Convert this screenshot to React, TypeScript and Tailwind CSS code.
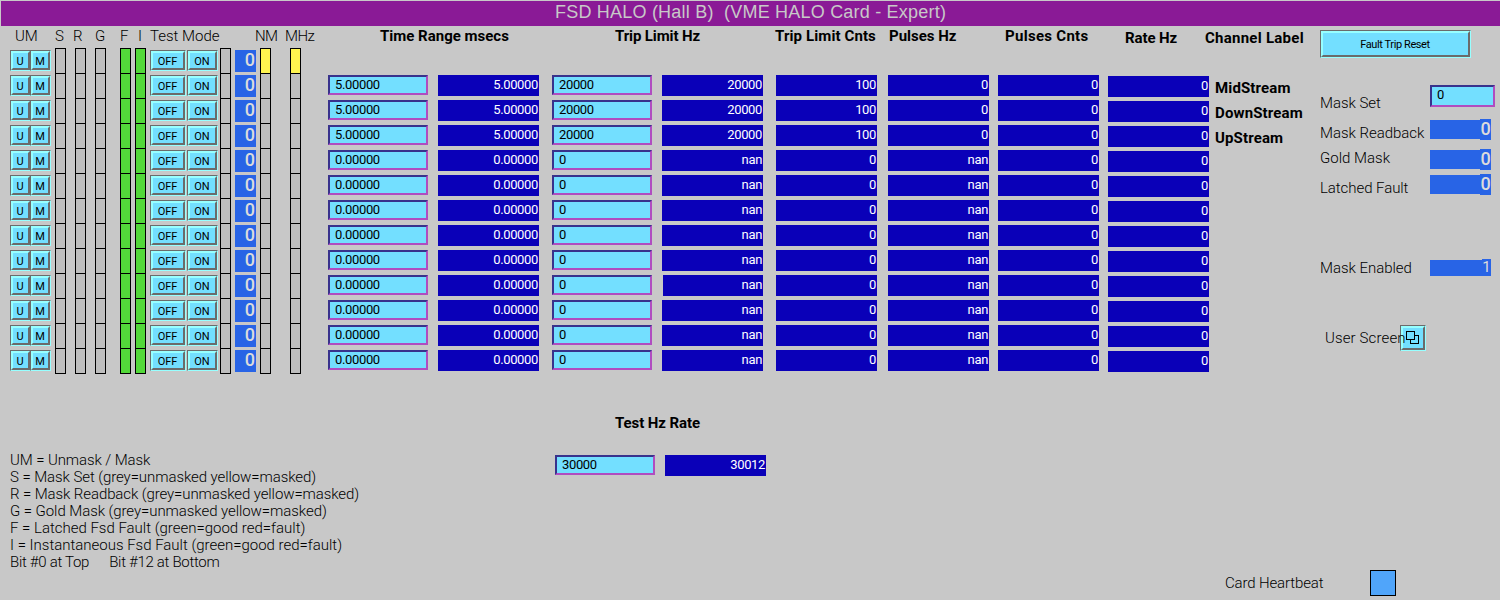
import type { ReactNode } from 'react';

type ChannelRow = {
  time: string;
  limit: string;
  limitReadback: string;
  limitCounts: string;
  pulsesHz: string;
  label: string;
};

const active = (label: string): ChannelRow => ({
  time: '5.00000',
  limit: '20000',
  limitReadback: '20000',
  limitCounts: '100',
  pulsesHz: '0',
  label,
});

const idle: ChannelRow = {
  time: '0.00000',
  limit: '0',
  limitReadback: 'nan',
  limitCounts: '0',
  pulsesHz: 'nan',
  label: '',
};

const channels: ChannelRow[] = [
  active('MidStream'),
  active('DownStream'),
  active('UpStream'),
  ...Array.from({ length: 9 }, () => idle),
];

const legend = [
  { text: 'UM = Unmask / Mask', tracking: 'tracking-[-0.1px]' },
  { text: 'S = Mask Set (grey=unmasked yellow=masked)', tracking: 'tracking-[-0.08px]' },
  { text: 'R = Mask Readback (grey=unmasked yellow=masked)', tracking: 'tracking-[-0.1px]' },
  { text: 'G = Gold Mask (grey=unmasked yellow=masked)', tracking: 'tracking-[-0.07px]' },
  { text: 'F = Latched Fsd Fault (green=good red=fault)', tracking: 'tracking-[-0.01px]' },
  { text: 'I = Instantaneous Fsd Fault (green=good red=fault)', tracking: 'tracking-[-0.01px]' },
  { text: 'Bit #0 at Top      Bit #12 at Bottom', tracking: 'tracking-[-0.3px]' },
];

function MotifButton({ className, children }: { className: string; children: ReactNode }) {
  return (
    <button
      className={`shrink-0 border border-t-[#6b6b6b] border-r-[#97ffff] border-b-[#97ffff] border-l-[#6b6b6b] ${className}`}
    >
      <span className="flex h-full w-full items-center justify-center border-2 border-t-[#97ffff] border-r-[#6b6b6b] border-b-[#6b6b6b] border-l-[#97ffff] bg-[#73dfff]">
        {children}
      </span>
    </button>
  );
}

function Caption({ children }: { children: string }) {
  return <span className="mt-0.5 mr-px leading-none">{children}</span>;
}

function Bit({ className }: { className: string }) {
  return <div className={`h-[26px] w-[11px] shrink-0 border border-black ${className}`} />;
}

function Field({ className, children }: { className: string; children: ReactNode }) {
  return (
    <div
      className={`shrink-0 border-2 border-t-[#38328c] border-r-[#b04cc0] border-b-[#b04cc0] border-l-[#38328c] bg-[#73dfff] pl-[5px] text-[13px] leading-[15px] tracking-[-0.35px] text-black ${className}`}
    >
      {children}
    </div>
  );
}

function Readback({ className, children }: { className: string; children: ReactNode }) {
  return (
    <div
      className={`h-[21px] shrink-0 bg-[#0a00b8] pr-px text-right text-[13px] leading-[19px] tracking-[-0.35px] text-white ${className}`}
    >
      {children}
    </div>
  );
}

function MaskValue({ value, big }: { value: string; big?: boolean }) {
  return (
    <div className={`mt-[5px] flex w-[61px] justify-end bg-[#2864e6] text-[#dcdcdc] ${big ? 'h-[19px]' : 'h-4'}`}>
      <span
        className={
          big
            ? '-mt-px h-[21px] w-[11px] bg-[#2864e6] text-center text-[18px] leading-[19px] font-medium'
            : '-mt-px h-[17px] w-[9px] bg-[#2864e6] text-center text-[15px] leading-[17px] font-normal'
        }
      >
        {value}
      </span>
    </div>
  );
}

function SideLabel({ className, children }: { className: string; children: ReactNode }) {
  return <span className={`h-[21px] shrink-0 text-[15px] leading-[21px] font-light ${className}`}>{children}</span>;
}

export default function App() {
  return (
    <div className="flex h-[600px] w-[1500px] flex-col overflow-hidden bg-[#c8c8c8] pt-px font-[Roboto,'Liberation_Sans',sans-serif] whitespace-pre text-black">
      <h1 className="ml-px h-[25px] shrink-0 bg-[#8a1a96] pl-[554px] font-['Liberation_Sans',sans-serif] text-[18px] leading-[22px] tracking-[0.21px] text-[#c8c8c8]">
        {'FSD HALO (Hall B)  (VME HALO Card - Expert)'}
      </h1>

      <main className="flex h-[544px] shrink-0">
        <section className="w-80 shrink-0">
          <div className="flex h-5 pl-[15px] text-[15px] leading-5 font-light">
            <span className="w-10 shrink-0">UM</span>
            <span className="w-[18px] shrink-0">S</span>
            <span className="w-[22px] shrink-0">R</span>
            <span className="w-[25px] shrink-0">G</span>
            <span className="w-[18px] shrink-0">F</span>
            <span className="w-3 shrink-0">I</span>
            <span className="w-[105px] shrink-0">Test Mode</span>
            <span className="w-[30px] shrink-0 tracking-[-0.6px]">NM</span>
            <span className="shrink-0 tracking-[-0.6px]">MHz</span>
          </div>
          <div className="mt-0.5">
            {Array.from({ length: 13 }, (_, i) => (
              <div key={i} className="flex h-[25px] items-start pl-2.5 text-[11px]">
                <MotifButton className="mt-0.5 h-[21px] w-[21px]">
                  <Caption>U</Caption>
                </MotifButton>
                <MotifButton className="mt-0.5 -ml-px h-[21px] w-[21px]">
                  <Caption>M</Caption>
                </MotifButton>
                <Bit className="ml-1 bg-[#bebebe]" />
                <Bit className="ml-[9px] bg-[#bebebe]" />
                <Bit className="ml-[9px] bg-[#bebebe]" />
                <Bit className="ml-3.5 bg-[#53d93a]" />
                <Bit className="ml-1 bg-[#53d93a]" />
                <MotifButton className="mt-0.5 ml-1 h-[21px] w-9">
                  <Caption>OFF</Caption>
                </MotifButton>
                <MotifButton className="mt-0.5 ml-px h-[21px] w-[31px]">
                  <Caption>ON</Caption>
                </MotifButton>
                <Bit className="ml-0.5 bg-[#bebebe]" />
                <div className="mt-0.5 ml-1 h-[22px] w-[21px] shrink-0 bg-[#2864e6] pr-px text-right text-[18px] leading-[19px] font-medium text-[#dcdcdc]">
                  0
                </div>
                <Bit className={i === 0 ? 'ml-1 bg-[#fff44f]' : 'ml-1 bg-[#bebebe]'} />
                <Bit className={i === 0 ? 'ml-[19px] bg-[#fff44f]' : 'ml-[19px] bg-[#bebebe]'} />
              </div>
            ))}
          </div>
          <div className="mt-[79px] pl-2.5 text-[15px] leading-[17px] font-light">
            {legend.map((line) => (
              <p key={line.text} className={line.tracking}>
                {line.text}
              </p>
            ))}
          </div>
        </section>

        <section className="w-[990px] shrink-0">
          <div className="flex h-5 pl-[60px] text-[15px] leading-5 font-bold">
            <span className="w-[235px] shrink-0">Time Range msecs</span>
            <span className="w-40 shrink-0 tracking-[-0.12px]">Trip Limit Hz</span>
            <span className="w-[114px] shrink-0 tracking-[0.11px]">Trip Limit Cnts</span>
            <span className="w-[116px] shrink-0">Pulses Hz</span>
            <span className="w-[120px] shrink-0 tracking-[0.29px]">Pulses Cnts</span>
            <span className="mt-0.5 w-20 shrink-0 tracking-[-0.11px]">Rate Hz</span>
            <span className="mt-0.5 shrink-0 tracking-[0.26px]">Channel Label</span>
          </div>
          <div className="mt-[29px]">
            {channels.map((row, i) => (
              <div key={i} className="flex h-[25px] items-start pl-2">
                <Field className="h-5 w-[100px]">{row.time}</Field>
                <Readback className="ml-2.5 w-[101px]">{row.time}</Readback>
                <Field className="ml-[13px] h-5 w-[100px]">{row.limit}</Field>
                <Readback className={i === 8 ? 'ml-[11px] w-[100px]' : 'ml-2.5 w-[101px]'}>{row.limitReadback}</Readback>
                <Readback className="ml-[13px] w-[101px]">{row.limitCounts}</Readback>
                <Readback className="ml-[11px] w-[101px]">{row.pulsesHz}</Readback>
                <Readback className="ml-[9px] w-[101px]">0</Readback>
                <Readback className="mt-px ml-[9px] w-[101px]">0</Readback>
                <span className="ml-1.5 text-[15px] leading-[27px] font-bold tracking-[0.14px]">{row.label}</span>
              </div>
            ))}
          </div>
          <h2 className="mt-[38px] pl-[295px] text-[15px] leading-[21px] font-bold tracking-[-0.08px]">Test Hz Rate</h2>
          <div className="mt-[21px] flex pl-[235px]">
            <Field className="h-5 w-[100px]">30000</Field>
            <Readback className="ml-2.5 w-[101px]">30012</Readback>
          </div>
        </section>

        <section className="w-[190px] shrink-0 pl-2.5">
          <MotifButton className="mt-1 block h-7 w-[151px] text-[11px] tracking-[-0.4px]">
            <span className="mr-px leading-none">Fault Trip Reset</span>
          </MotifButton>
          <div className="mt-[27px] flex h-[30px] items-start">
            <SideLabel className="mt-2 w-[110px] tracking-[-0.04px]">Mask Set</SideLabel>
            <Field className="h-[22px] w-[65px]">0</Field>
          </div>
          <div className="flex h-[30px] items-start">
            <SideLabel className="mt-2 w-[110px] tracking-[-0.04px]">Mask Readback</SideLabel>
            <MaskValue value="0" big />
          </div>
          <div className="flex h-[25px] items-start">
            <SideLabel className="mt-[3px] w-[110px]">Gold Mask</SideLabel>
            <MaskValue value="0" big />
          </div>
          <div className="flex h-[30px] items-start">
            <SideLabel className="mt-2 w-[110px] tracking-[-0.06px]">Latched Fault</SideLabel>
            <MaskValue value="0" big />
          </div>
          <div className="mt-[55px] flex h-[25px] items-start">
            <SideLabel className="mt-[3px] w-[110px] tracking-[-0.03px]">Mask Enabled</SideLabel>
            <MaskValue value="1" />
          </div>
          <div className="mt-[45px] flex items-start pl-[5px]">
            <SideLabel className="relative z-10 mt-[3px] w-[75px] tracking-[0.13px]">User Screen</SideLabel>
            <MotifButton className="h-[26px] w-[26px]">
              <svg width="14" height="14" viewBox="0 0 14 14" fill="#73dfff" stroke="#000" shapeRendering="crispEdges">
                <rect x="4.5" y="4.5" width="8" height="8" />
                <rect x="0.5" y="0.5" width="8" height="8" />
              </svg>
            </MotifButton>
          </div>
        </section>
      </main>

      <footer className="flex h-[30px] shrink-0 pl-[1225px]">
        <span className="w-[145px] text-[15px] leading-[27px] font-light tracking-[-0.14px]">Card Heartbeat</span>
        <div className="h-[26px] w-[26px] border border-black bg-[#50a5fa]" />
      </footer>
    </div>
  );
}
